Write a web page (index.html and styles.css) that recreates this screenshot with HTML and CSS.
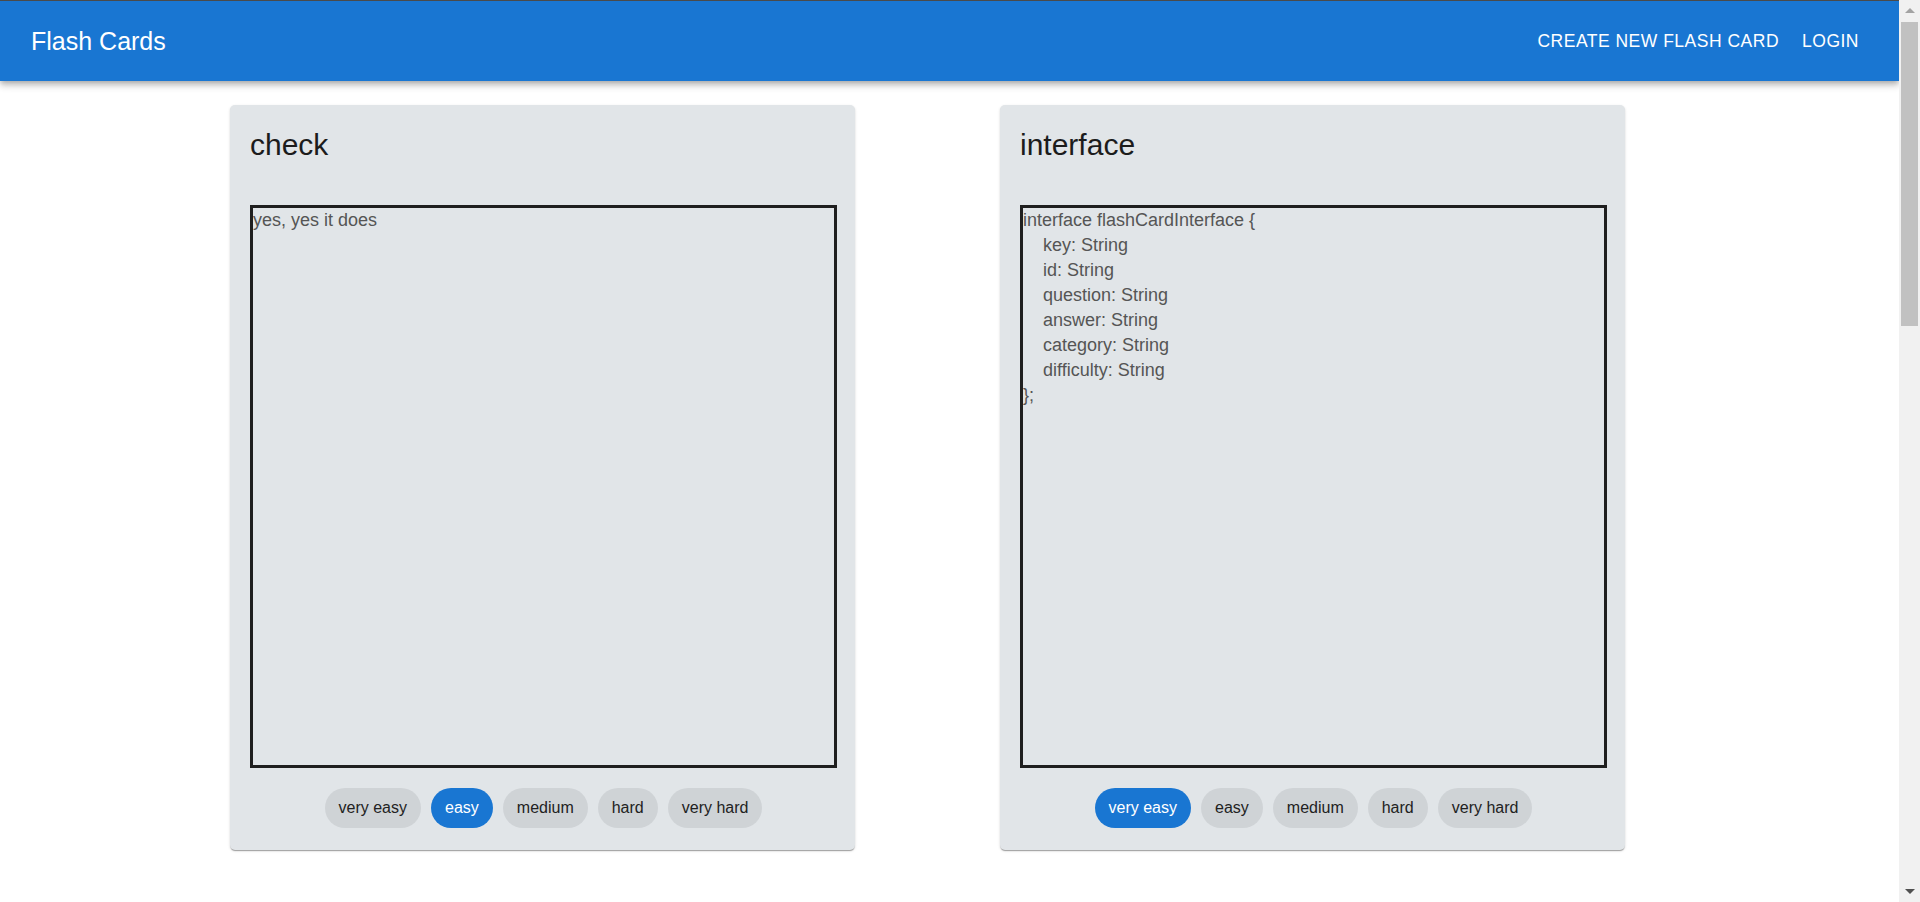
FILE: index.html
```html
<!DOCTYPE html>
<html lang="en">
<head>
<meta charset="utf-8">
<title>Flash Cards</title>
<link rel="stylesheet" href="styles.css">
</head>
<body>
<header class="appbar">
  <div class="brand">Flash Cards</div>
  <nav class="nav">
    <a class="nav-btn" href="#">Create new flash card</a>
    <a class="nav-btn" href="#">Login</a>
  </nav>
</header>
<main class="grid">
  <section class="card">
    <h2 class="card-title">check</h2>
    <textarea class="answer" readonly>yes, yes it does</textarea>
    <div class="levels">
      <button class="level">very easy</button>
      <button class="level active">easy</button>
      <button class="level">medium</button>
      <button class="level">hard</button>
      <button class="level">very hard</button>
    </div>
  </section>
  <section class="card">
    <h2 class="card-title">interface</h2>
    <textarea class="answer" readonly>interface flashCardInterface {
    key: String
    id: String
    question: String
    answer: String
    category: String
    difficulty: String
};</textarea>
    <div class="levels">
      <button class="level active">very easy</button>
      <button class="level">easy</button>
      <button class="level">medium</button>
      <button class="level">hard</button>
      <button class="level">very hard</button>
    </div>
  </section>
  <section class="card">
    <h2 class="card-title">useState</h2>
    <textarea class="answer" readonly>const [value, setValue] = useState(initial);</textarea>
    <div class="levels">
      <button class="level">very easy</button>
      <button class="level">easy</button>
      <button class="level active">medium</button>
      <button class="level">hard</button>
      <button class="level">very hard</button>
    </div>
  </section>
  <section class="card">
    <h2 class="card-title">props</h2>
    <textarea class="answer" readonly>data passed from a parent component to a child</textarea>
    <div class="levels">
      <button class="level">very easy</button>
      <button class="level active">easy</button>
      <button class="level">medium</button>
      <button class="level">hard</button>
      <button class="level">very hard</button>
    </div>
  </section>
  <section class="card">
    <h2 class="card-title">map</h2>
    <textarea class="answer" readonly>returns a new array with the results of calling a function on every element</textarea>
    <div class="levels">
      <button class="level">very easy</button>
      <button class="level">easy</button>
      <button class="level">medium</button>
      <button class="level active">hard</button>
      <button class="level">very hard</button>
    </div>
  </section>
  <section class="card">
    <h2 class="card-title">closure</h2>
    <textarea class="answer" readonly>a function bundled together with references to its surrounding state</textarea>
    <div class="levels">
      <button class="level">very easy</button>
      <button class="level">easy</button>
      <button class="level">medium</button>
      <button class="level">hard</button>
      <button class="level active">very hard</button>
    </div>
  </section>
</main>
<div class="scrollbar" aria-hidden="true">
  <div class="sb-btn"><span class="sb-arrow up"></span></div>
  <div class="sb-track"><div class="sb-thumb"></div></div>
  <div class="sb-btn"><span class="sb-arrow down"></span></div>
</div>
</body>
</html>
```
FILE: styles.css
```css
* { box-sizing: border-box; }

html { background: #ffffff; }

body {
  margin: 0;
  padding-right: 21px;
  font-family: "Liberation Sans", Arial, sans-serif;
  color: rgba(0, 0, 0, 0.87);
}

.appbar {
  height: 81px;
  border-top: 1px solid #4a4a4a;
  background: #1976d2;
  color: #ffffff;
  display: flex;
  align-items: center;
  justify-content: space-between;
  padding: 0 30px 0 31px;
  position: relative;
  z-index: 2;
  box-shadow: 0 2px 5px -1px rgba(0,0,0,0.2), 0 5px 6px 0 rgba(0,0,0,0.14), 0 1px 12px 0 rgba(0,0,0,0.12);
}

.brand {
  font-size: 25px;
  line-height: 1.6;
  font-weight: 400;
}

.nav {
  display: flex;
  align-items: center;
  gap: 3px;
}

.nav-btn {
  color: #ffffff;
  text-decoration: none;
  text-transform: uppercase;
  font-size: 17.5px;
  letter-spacing: 0.5px;
  line-height: 1.75;
  padding: 7.5px 10px;
}

.grid {
  display: grid;
  grid-template-columns: 625px 625px;
  column-gap: 145px;
  row-gap: 64px;
  padding: 24px 0 64px 230px;
}

.card {
  background: #e1e5e8;
  border-radius: 5px;
  padding: 20px 18px 22px 20px;
  box-shadow: 0 2px 1px -1px rgba(0,0,0,0.2), 0 1px 1px 0 rgba(0,0,0,0.14), 0 1px 3px 0 rgba(0,0,0,0.12);
  display: flex;
  flex-direction: column;
}

.card-title {
  margin: 0 0 40px;
  font-size: 30px;
  line-height: 40px;
  font-weight: 400;
  color: #1c1c1c;
}

.answer {
  display: block;
  width: 587px;
  height: 563px;
  margin: 0;
  padding: 0;
  border: 3px solid #1f1f1f;
  background: transparent;
  font-family: "Liberation Sans", Arial, sans-serif;
  font-size: 18px;
  line-height: 25px;
  color: #555555;
  resize: none;
  outline: none;
  overflow: hidden;
}

.levels {
  margin-top: 20px;
  display: flex;
  justify-content: center;
  gap: 10px;
}

.level {
  height: 40px;
  padding: 0 14px;
  border: none;
  border-radius: 20px;
  background: #cfd3d6;
  color: #222222;
  font-family: "Liberation Sans", Arial, sans-serif;
  font-size: 16px;
  cursor: pointer;
}

.level.active {
  background: #1976d2;
  color: #ffffff;
}

/* imitation of the browser's classic scrollbar */
.scrollbar {
  position: fixed;
  top: 0;
  right: 0;
  width: 21px;
  height: 100vh;
  background: #f1f1f1;
  display: flex;
  flex-direction: column;
  z-index: 5;
}

.sb-btn {
  height: 21px;
  display: flex;
  align-items: center;
  justify-content: center;
}

.sb-arrow {
  width: 0;
  height: 0;
  border-left: 5px solid transparent;
  border-right: 5px solid transparent;
}

.sb-arrow.up { border-bottom: 5px solid #a3a3a3; }
.sb-arrow.down { border-top: 5px solid #505050; }

.sb-track {
  flex: 1;
  padding: 1px 2px 0;
}

.sb-thumb {
  height: 304px;
  background: #c1c1c1;
}
```
